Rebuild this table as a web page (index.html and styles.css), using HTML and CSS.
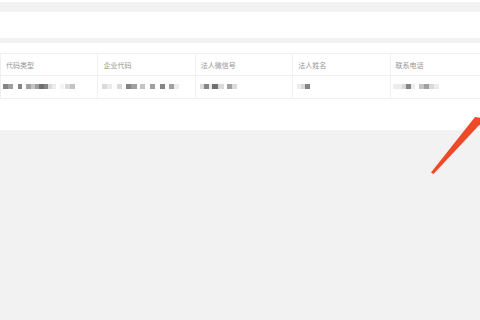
FILE: index.html
```html
<!DOCTYPE html>
<html lang="zh">
<head>
<meta charset="utf-8">
<link rel="stylesheet" href="styles.css">
</head>
<body>
<div class="page">
  <div class="strip"></div>
  <div class="band"></div>
  <div class="panel">
    <div class="table">
      <div class="cell head">代码类型</div>
      <div class="cell head">企业代码</div>
      <div class="cell head">法人微信号</div>
      <div class="cell head">法人姓名</div>
      <div class="cell head">联系电话</div>
      <div class="cell body first">
        <span class="px d2 w5"></span><span class="px d3 w5"></span><span class="px l5 w5"></span><span class="px d2 w4"></span><span class="px l5 w4"></span><span class="px d3 w5"></span><span class="px l4 w4"></span><span class="px d3 w4"></span><span class="px d1 w5"></span><span class="px d2 w4"></span><span class="px l2 w4"></span><span class="px l1 w4"></span><span class="px l5 w4"></span><span class="px l3 w4"></span><span class="px l5 w1"></span><span class="px l2 w5"></span><span class="px l4 w5"></span>
      </div>
      <div class="cell body">
        <span class="px l2 w5"></span><span class="px l1 w5"></span><span class="px l5 w5"></span><span class="px l2 w5"></span><span class="px l5 w4"></span><span class="px d2 w5"></span><span class="px d3 w6"></span><span class="px l5 w3"></span><span class="px l4 w5"></span><span class="px l5 w5"></span><span class="px d3 w5"></span><span class="px l5 w5"></span><span class="px d2 w5"></span><span class="px l5 w4"></span><span class="px d3 w5"></span><span class="px l1 w5"></span>
      </div>
      <div class="cell body">
        <span class="px l2 w4"></span><span class="px d2 w5"></span><span class="px l1 w3"></span><span class="px d1 w6"></span><span class="px l2 w6"></span><span class="px l5 w3"></span><span class="px d3 w5"></span><span class="px l2 w5"></span>
      </div>
      <div class="cell body">
        <span class="px l1 w4"></span><span class="px l2 w4"></span><span class="px d2 w5"></span>
      </div>
      <div class="cell body last">
        <span class="px l1 w5"></span><span class="px l1 w4"></span><span class="px l2 w4"></span><span class="px d2 w5"></span><span class="px l1 w4"></span><span class="px l5 w4"></span><span class="px l4 w5"></span><span class="px d3 w5"></span><span class="px l2 w5"></span><span class="px l1 w5"></span>
      </div>
    </div>
  </div>
</div>
<svg class="arrow" width="480" height="320" viewBox="0 0 480 320" xmlns="http://www.w3.org/2000/svg">
  <polygon points="431,172.5 475,117 482,118 482,122 433.5,174" fill="#ee4a2a"/>
</svg>
</body>
</html>
```

FILE: styles.css
```css
html, body {
  margin: 0;
  padding: 0;
}
body {
  background: #f2f2f2;
  width: 480px;
  height: 320px;
  overflow: hidden;
  font-family: "Noto Sans CJK SC", "Noto Sans", sans-serif;
}
.page {
  display: flex;
  flex-direction: column;
}
.strip {
  height: 2px;
  background: #ffffff;
  margin-bottom: 10px;
}
.band {
  height: 26px;
  background: #ffffff;
  margin-bottom: 5px;
}
.panel {
  height: 87px;
  background: #ffffff;
  padding-top: 10px;
  box-sizing: border-box;
  overflow: hidden;
}
.table {
  display: grid;
  grid-template-columns: repeat(5, 97.4px);
  grid-template-rows: 22px 23px;
  width: 487px;
  border-top: 1px solid #f0f0f0;
  border-left: 1px solid #f0f0f0;
}
.cell {
  border-right: 1px solid #f0f0f0;
  border-bottom: 1px solid #f0f0f0;
  display: flex;
  align-items: center;
  padding-left: 5px;
  box-sizing: border-box;
}
.head {
  font-size: 7px;
  color: #959595;
  padding-top: 1px;
}
.body {
  padding-left: 4px;
  padding-bottom: 2px;
}
.body.first {
  padding-left: 2px;
}
.body.last {
  padding-left: 2px;
}
.px {
  display: inline-block;
  height: 5px;
}
.w1 { width: 1px; }
.w3 { width: 3px; }
.w4 { width: 4px; }
.w5 { width: 5px; }
.w6 { width: 6px; }
.d1 { background: #707070; }
.d2 { background: #858585; }
.d3 { background: #a0a0a0; }
.l1 { background: #ececec; }
.l2 { background: #dadada; }
.l3 { background: #f4f4f4; }
.l4 { background: #c4c4c4; }
.l5 { background: #ffffff; }
.arrow {
  position: absolute;
  left: 0;
  top: 0;
  pointer-events: none;
}
```
